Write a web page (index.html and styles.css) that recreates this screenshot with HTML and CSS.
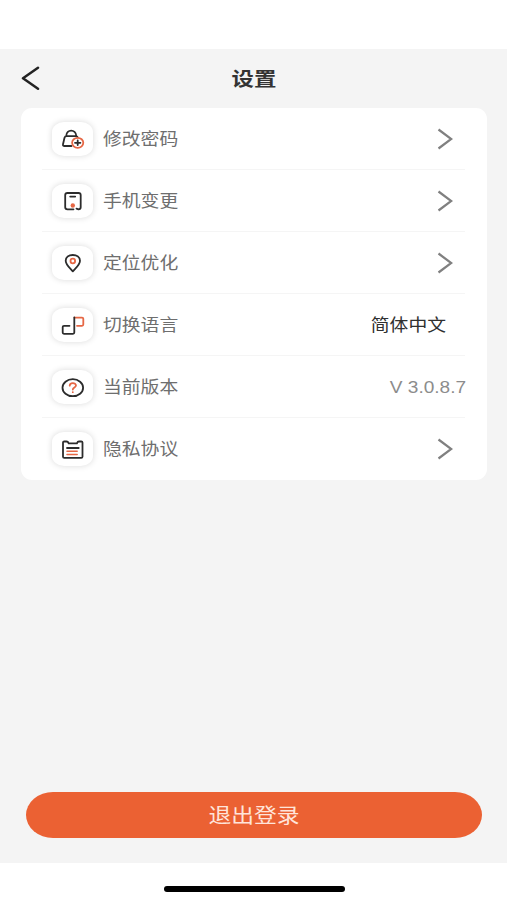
FILE: index.html
```html
<!DOCTYPE html>
<html lang="zh-CN">
<head>
<meta charset="utf-8">
<title>设置</title>
<link rel="stylesheet" href="styles.css">
</head>
<body>
<div class="screen">
  <header class="header">
    <svg class="back" viewBox="0 0 20 26"><path d="M18 1.700 3 12.200 18 22.700"/></svg>
    <h1 class="title"><span class="wide">设置</span></h1>
  </header>
  <main class="card">
    <div class="row">
      <svg class="tile" viewBox="0 0 41 34"><path d="M19.500 24H12.500Q10.700 24 11 22.300L12.500 15.700Q13 14.200 14.500 14.200H24Q25.300 14.200 25.700 15.300M14.200 14C14.500 6.800 23.800 6.800 24.300 14"/><ellipse class="accent" cx="25.700" cy="20.800" rx="5.600" ry="5"/><path d="M23 20.800h5.400M25.700 18.500v4.600"/></svg>
      <span class="label"><span class="wide">修改密码</span></span>
      <svg class="chevron" viewBox="0 0 16 22"><path d="M1.500 1.500 14.300 11 1.500 20.500"/></svg>
    </div>
    <div class="row">
      <svg class="tile" viewBox="0 0 41 34"><path d="M21.500 25.300H15.500Q13.200 25.300 13.200 23.300V11Q13.200 9 15.500 9H26.500Q28.700 9 28.700 11V23.300Q28.700 25.300 26.500 25.300L24.500 24.600M18.200 12.600H23.200"/><circle class="dot" cx="20.800" cy="21.500" r="2.200"/></svg>
      <span class="label"><span class="wide">手机变更</span></span>
      <svg class="chevron" viewBox="0 0 16 22"><path d="M1.500 1.500 14.300 11 1.500 20.500"/></svg>
    </div>
    <div class="row">
      <svg class="tile" viewBox="0 0 41 34"><path d="M20.800 25.300C18 22 13.700 19 13.700 14.800C13.700 11.200 16.800 9 20.800 9S28 11.200 28 14.800C28 19 23.600 22 20.800 25.300Z"/><circle class="accent" cx="20.800" cy="15" r="2.300"/></svg>
      <span class="label"><span class="wide">定位优化</span></span>
      <svg class="chevron" viewBox="0 0 16 22"><path d="M1.500 1.500 14.300 11 1.500 20.500"/></svg>
    </div>
    <div class="row">
      <svg class="tile" viewBox="0 0 41 34"><path class="accent" d="M22.500 9.600H30Q31.300 9.600 31.300 10.800V16.600Q31.300 17.800 30 17.800H25"/><path d="M17.500 17.800H12Q10.700 17.800 10.700 19V24.600Q10.700 25.800 12 25.800H21Q22.300 25.800 22.300 24.600V9.300"/></svg>
      <span class="label"><span class="wide">切换语言</span></span>
      <span class="value language"><span class="wide">简体中文</span></span>
    </div>
    <div class="row">
      <svg class="tile" viewBox="0 0 41 34"><ellipse cx="20.800" cy="17.700" rx="10.300" ry="8.500"/><path class="accent" d="M17.700 15.700C17.700 12.300 24 12.300 24 15.600C24 17.500 20.800 17.400 20.800 19.500M20.800 22.100V22.200"/></svg>
      <span class="label"><span class="wide">当前版本</span></span>
      <span class="value version"><span class="wide">V 3.0.8.7</span></span>
    </div>
    <div class="row">
      <svg class="tile" viewBox="0 0 41 34"><path d="M11 10.500Q11 9.500 12.300 9.500H14.500Q16 9.500 16.700 11.300H24.900Q25.600 9.500 27 9.500H29.200Q30.500 9.500 30.500 10.500V24.700Q30.500 25.900 29.200 25.900H12.300Q11 25.900 11 24.700ZM15 16H26.700"/><path class="accent lines" d="M15 19.300H25.200M15 22.400H25.200"/></svg>
      <span class="label"><span class="wide">隐私协议</span></span>
      <svg class="chevron" viewBox="0 0 16 22"><path d="M1.500 1.500 14.300 11 1.500 20.500"/></svg>
    </div>
  </main>
  <button class="logout"><span class="wide">退出登录</span></button>
</div>
<div class="home"></div>
</body>
</html>
```
FILE: styles.css
```css
* { box-sizing: border-box; }
body {
  margin: 0;
  height: 900px;
  padding-top: 49px;
  background: #fff;
  font-family: "Liberation Sans", "Noto Sans CJK SC", sans-serif;
  overflow: hidden;
}
svg {
  fill: none;
  stroke: #2c2c2c;
  stroke-width: 1.8;
  stroke-linecap: round;
  stroke-linejoin: round;
  flex: none;
}
.wide { display: inline-block; transform: scaleX(1.14); }
.screen {
  height: 814px;
  background: #f4f4f4;
  display: flex;
  flex-direction: column;
}
.header {
  height: 59px;
  padding: 0 20px;
  display: grid;
  grid-template-columns: 20px 1fr 20px;
  align-items: center;
}
.back { width: 20px; height: 26px; stroke-width: 2.5; stroke: #222; }
.title {
  margin: 0;
  padding: 2px 0 0 1px;
  text-align: center;
  font-size: 19px;
  line-height: 28px;
  font-weight: 700;
  color: #333;
}
.title .wide { transform: scaleX(1.18); }
.card {
  height: 372px;
  margin: 0 20px 0 21px;
  padding: 0 22px 0 21px;
  background: #fff;
  border-radius: 11px;
}
.row {
  height: 62px;
  padding-left: 10px;
  display: flex;
  align-items: center;
  border-bottom: 1px solid #f5f5f5;
}
.row:last-child { border-bottom-color: transparent; }
.tile {
  width: 41px;
  height: 34px;
  border-radius: 12px / 10px;
  background: #fff;
  box-shadow: 0 0 6px rgba(0, 0, 0, .15);
}
.accent { stroke: #e66745; }
.lines { stroke-width: 1.5; }
.dot { fill: #e66745; stroke: none; }
.label {
  margin-left: 10px;
  font-size: 16.500px;
  line-height: 24px;
  color: #6e6e6e;
}
.label .wide { transform-origin: left; }
.chevron {
  width: 16px;
  height: 22px;
  margin: 0 12.500px 0 auto;
  stroke: #808080;
  stroke-width: 2.2;
  stroke-linecap: butt;
  stroke-linejoin: miter;
}
.value { margin-left: auto; line-height: 24px; }
.value .wide { transform-origin: right; }
.language { margin-right: 19px; font-size: 16.500px; color: #303030; }
.version { margin-right: -1px; padding-top: 3px; font-size: 16px; color: #8c8c8c; }
.version .wide { transform: scaleX(1.19); }
.logout {
  height: 46px;
  margin: auto 25px 25px 26px;
  padding: 2px 0 0;
  border: 0;
  border-radius: 27px / 23px;
  background: #eb6133;
  color: #ffe4da;
  font-family: inherit;
  font-size: 20px;
  line-height: 30px;
}
.home {
  width: 181px;
  height: 6px;
  margin: 23px auto 0 164px;
  border-radius: 3px;
  background: #000;
}
```
